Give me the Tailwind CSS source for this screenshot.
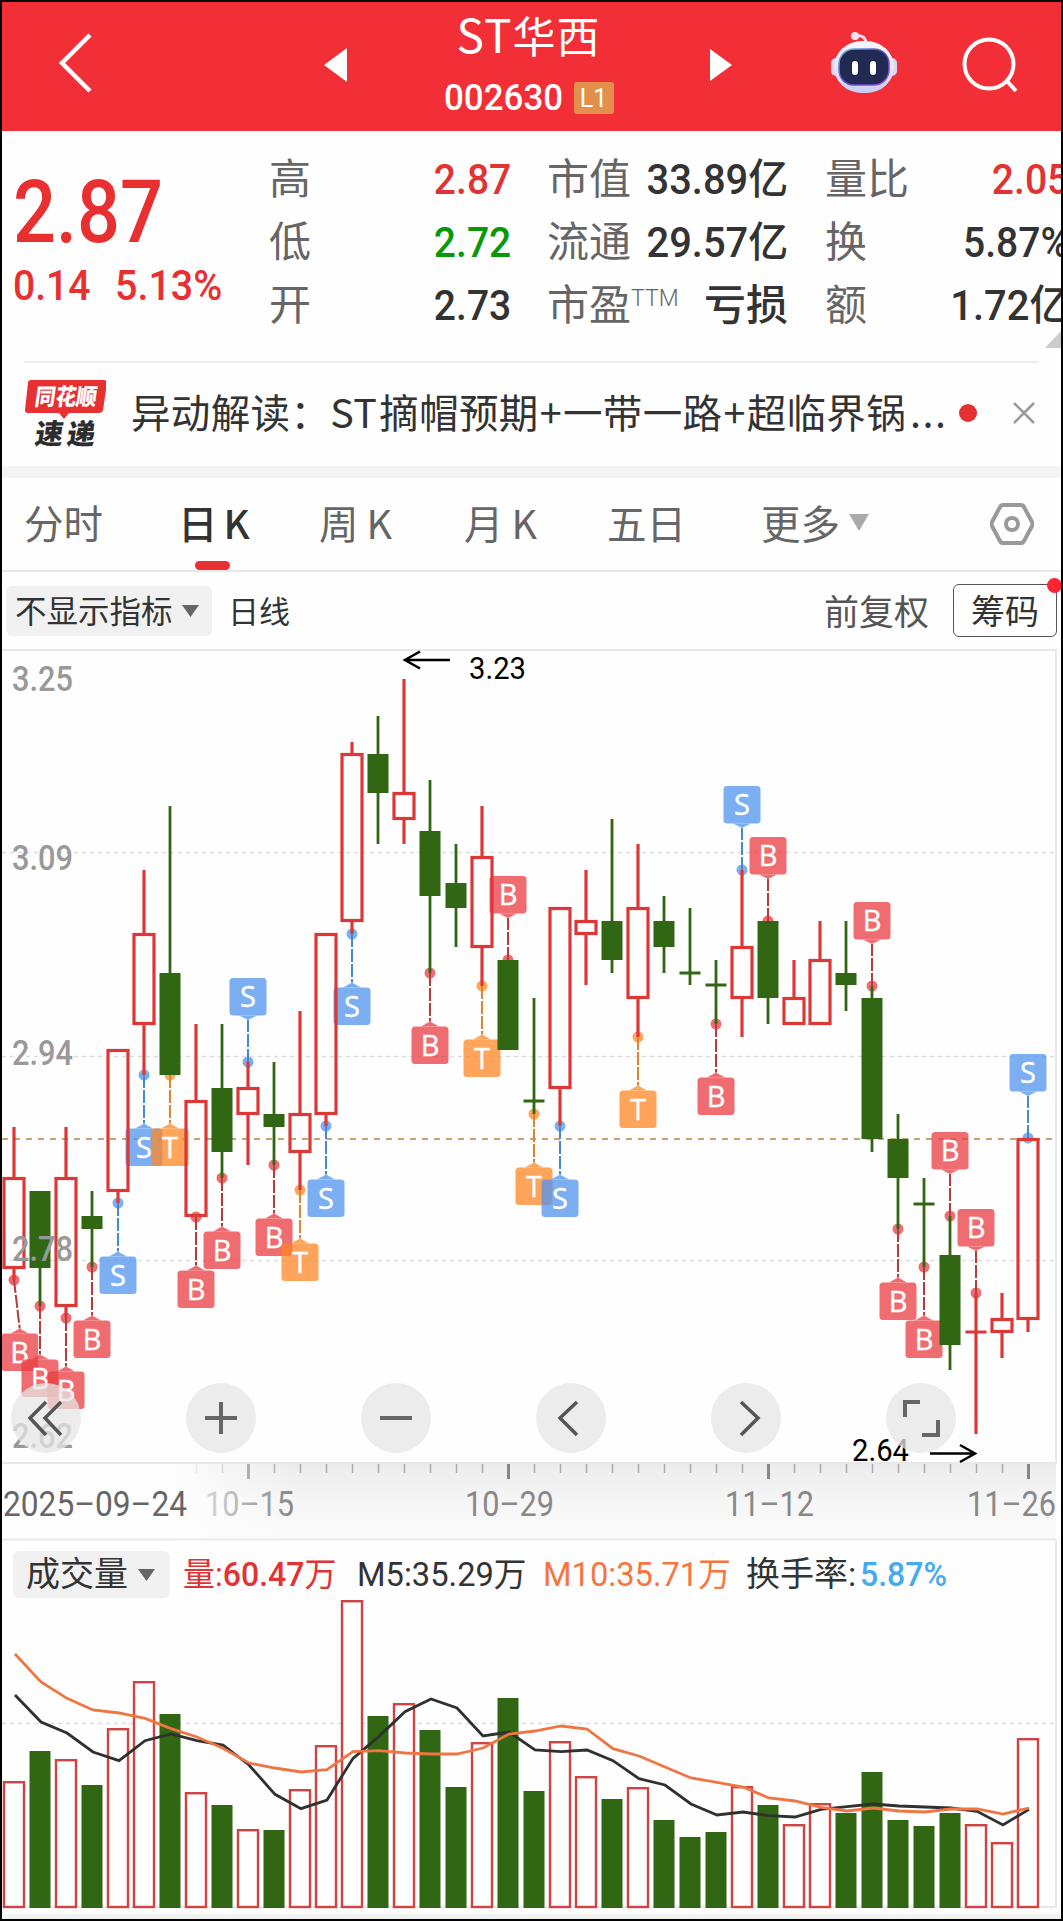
<!DOCTYPE html>
<html lang="zh-CN">
<head>
  <meta charset="UTF-8" />
  <meta name="viewport" content="width=device-width, initial-scale=1.0" />
  <title>ST华西 002630</title>
  <script src="https://cdn.jsdelivr.net/npm/@tailwindcss/browser@4"></script>
</head>
<body class="bg-black">
  <div class="w-[1063px] h-[1921px] border-2 border-black bg-[#fefefe] overflow-hidden flex flex-col font-['Roboto','Noto_Sans_CJK_SC',sans-serif] text-[#333] whitespace-nowrap">

    <!-- Header -->
    <header class="h-[129px] shrink-0 bg-[#f22f37] text-white flex items-center">
      <svg class="ml-[56px] -mt-2 w-[36px] h-[62px]" viewBox="0 0 36 62" fill="none" stroke="white" stroke-width="4.500"><path d="M32 3 4 31l28 28" /></svg>
      <svg class="ml-[230px] -mt-1 w-[23px] h-[34px]" viewBox="0 0 23 34" fill="white"><path d="M23 0v34L0 17z" /></svg>
      <div class="w-[363px] h-full flex flex-col items-center">
        <h1 class="text-[43px] tracking-[1px] leading-[62px] h-[66px] font-['Noto_Sans_CJK_SC',sans-serif]"><span class="text-[46px]">ST</span>华西</h1>
        <div class="flex items-center gap-[11px] h-[60px]">
          <span class="text-[36px] leading-none font-medium w-[119px]"><span class="inline-block origin-left scale-x-[.97]">002630</span></span>
          <span class="w-[40px] h-[32px] rounded-[3px] bg-[#e2904c] text-[25px] leading-[33px] text-center">L1</span>
        </div>
      </div>
      <svg class="-mt-1 w-[22px] h-[34px]" viewBox="0 0 22 34" fill="white"><path d="M0 1v32l22-16z" /></svg>
      <!-- Robot assistant -->
      <svg class="ml-[98px] -mt-2 w-[68px] h-[64px]" viewBox="0 0 68 64">
        <defs>
          <linearGradient id="head" x1="0" y1="0" x2="0" y2="1"><stop offset="0" stop-color="#fbf7ff" /><stop offset=".65" stop-color="#e4dffa" /><stop offset="1" stop-color="#c5cdf6" /></linearGradient>
          <linearGradient id="rim" x1="0" y1="0" x2="1" y2="1"><stop offset="0" stop-color="#6ec9dd" /><stop offset=".5" stop-color="#5a48c8" /><stop offset="1" stop-color="#8b55e8" /></linearGradient>
        </defs>
        <path d="M26 5c7-1 10 2 10 8" fill="none" stroke="#f3dcec" stroke-width="3" />
        <circle cx="25" cy="5" r="4" fill="#f6e3ee" />
        <rect x="1" y="27" width="12" height="18" rx="5" fill="#d9d5f5" />
        <rect x="55" y="27" width="12" height="18" rx="5" fill="#d9d5f5" />
        <rect x="4" y="10" width="60" height="52" rx="28" fill="url(#head)" />
        <rect x="9" y="18" width="50" height="36" rx="15" fill="#202a52" stroke="url(#rim)" stroke-width="1.500" />
        <rect x="22" y="30" width="6" height="14" rx="3" fill="white" />
        <rect x="40" y="30" width="6" height="14" rx="3" fill="white" />
      </svg>
      <svg class="ml-[63px] -mt-1 w-[58px] h-[58px]" viewBox="0 0 58 58" fill="none" stroke="white" stroke-width="4"><circle cx="28" cy="28" r="24.500" /><path d="m45 44 10 11" /></svg>
    </header>

    <!-- Quote -->
    <section class="h-[230px] shrink-0 flex relative">
      <div class="w-[267px] shrink-0 pl-[11px] pt-[33px] text-[#e93030]">
        <div class="text-[87px] leading-[96px] font-medium origin-left scale-x-[.87]">2.87</div>
        <div class="flex gap-[27px] text-[42px] leading-[52px]">
          <span class="w-[75px] inline-block origin-left scale-x-[.93] font-medium">0.14</span>
          <span class="inline-block origin-left scale-x-[.94] font-medium">5.13%</span>
        </div>
      </div>
      <div class="w-[242px] shrink-0 pt-[17px] text-[42px] leading-[63px]">
        <div class="flex justify-between"><span class="text-[#666]">高</span><span class="text-[#e13333] font-medium origin-right scale-x-[.93]">2.87</span></div>
        <div class="flex justify-between"><span class="text-[#666]">低</span><span class="text-[#089808] font-medium origin-right scale-x-[.93]">2.72</span></div>
        <div class="flex justify-between"><span class="text-[#666]">开</span><span class="font-medium origin-right scale-x-[.93]">2.73</span></div>
      </div>
      <div class="w-[241px] shrink-0 ml-[36px] pt-[17px] text-[42px] leading-[63px]">
        <div class="flex justify-between"><span class="text-[#666]">市值</span><span class="font-medium origin-right scale-x-[.95]">33.89亿</span></div>
        <div class="flex justify-between"><span class="text-[#666]">流通</span><span class="font-medium origin-right scale-x-[.95]">29.57亿</span></div>
        <div class="flex justify-between"><span class="text-[#666] flex">市盈<span class="text-[23px] leading-[50px] font-light">TTM</span></span><span class="font-medium">亏损</span></div>
      </div>
      <div class="w-[244px] shrink-0 ml-[37px] pt-[17px] text-[42px] leading-[63px]">
        <div class="flex justify-between"><span class="text-[#666]">量比</span><span class="text-[#e13333] font-medium origin-right scale-x-[.93]">2.05</span></div>
        <div class="flex justify-between"><span class="text-[#666]">换</span><span class="font-medium origin-right scale-x-[.93]">5.87%</span></div>
        <div class="flex justify-between"><span class="text-[#666]">额</span><span class="font-medium origin-right scale-x-[.95]">1.72亿</span></div>
      </div>
      <svg class="absolute left-[1043px] top-[200px] w-[16px] h-[17px]" viewBox="0 0 16 17" fill="#ccc"><path d="M16 0v17H0z" /></svg>
    </section>

    <!-- News -->
    <section class="h-[105px] shrink-0 mx-[22px] border-t-2 border-[#eee] flex items-center">
      <svg class="w-[82px] h-[80px]" viewBox="0 0 82 80">
        <path d="M7 5h73q3 0 3 3l-4 27q-1 3-4 3H45l-5 6-5-6H4q-3 0-3-3L4 8q0-3 3-3z" fill="#e63031" />
        <g font-family="Noto Sans CJK SC, sans-serif" font-weight="900">
          <text transform="translate(10 30) skewX(-8)" font-size="23" textLength="62" lengthAdjust="spacingAndGlyphs" fill="white">同花顺</text>
          <text transform="translate(10 69) skewX(-8)" font-size="28" textLength="60" fill="#2d2d2d">速递</text>
        </g>
      </svg>
      <div class="ml-[25px] w-[820px] -mt-[7px] text-[39.5px] tracking-[.35px] leading-[60px] font-['Noto_Sans_CJK_SC',sans-serif]">异动解读：ST<span class="ml-[2px]">摘帽预期</span><span class="mx-[1px]">+</span>一带一路<span class="mx-[1px]">+</span>超临界锅<span class="ml-1 tracking-[1.500px]">...</span></div>
      <div class="w-[18px] h-[18px] shrink-0 rounded-full bg-[#e63031] ml-[8px] -mt-1"></div>
      <svg class="ml-[35px] -mt-1 w-[24px] h-[24px] shrink-0" viewBox="0 0 24 24" fill="none" stroke="#999" stroke-width="2.500"><path d="m2 2 20 20M22 2 2 22" /></svg>
    </section>
    <div class="h-[12px] shrink-0 bg-[#f4f4f4]"></div>

    <!-- Period tabs -->
    <nav class="h-[94px] shrink-0 border-b-2 border-[#e8e8e8] flex items-center text-[39.5px] font-['Noto_Sans_CJK_SC',sans-serif] text-[#666]">
      <span class="ml-[22px] w-[154px] -mt-1">分时</span>
      <span class="w-[141px] h-full relative flex items-center pb-1 text-[#333] font-medium">日<span class="ml-1.5">K</span><span class="absolute left-[17px] bottom-0 w-[35px] h-[9px] rounded-full bg-[#e63031]"></span></span>
      <span class="w-[145px] flex -mt-1">周<span class="ml-2">K</span></span>
      <span class="w-[143px] flex -mt-1">月<span class="ml-2">K</span></span>
      <span class="w-[154px] -mt-1">五日</span>
      <span class="w-[229px] flex items-center gap-[9px] -mt-1">更多<svg class="w-[20px] h-[17px]" viewBox="0 0 20 17" fill="#aaa"><path d="M0 0h20L10 17z" /></svg></span>
      <svg class="w-[44px] h-[44px]" viewBox="0 0 44 44" fill="none" stroke="#999" stroke-width="4"><path d="M13 3h18q2 0 3 2l8 15q1 2 0 4l-8 15q-1 2-3 2H13q-2 0-3-2L2 24q-1-2 0-4l8-15q1-2 3-2z" /><circle cx="22" cy="22" r="6" /></svg>
    </nav>

    <!-- Indicator bar -->
    <div class="h-[77px] shrink-0 flex items-center font-['Noto_Sans_CJK_SC',sans-serif]">
      <div class="ml-[4px] w-[206px] h-[50px] rounded-md bg-[#f1f1f1] flex items-center pl-[9px] gap-[9px] text-[31.5px]"><span class="-mt-[2px]">不显示指标</span><svg class="w-[17px] h-[12px]" viewBox="0 0 17 12" fill="#666"><path d="M0 0h17L8.500 12z" /></svg></div>
      <span class="ml-[16px] text-[31px]">日线</span>
      <span class="ml-auto text-[35px] text-[#555]">前复权</span>
      <div class="relative ml-[24px] mr-[4px] w-[104px] h-[53px] rounded-[6px] border border-[#555] text-[34px] leading-[50px] text-center">筹码<span class="absolute -right-[6px] -top-[7px] w-[15px] h-[15px] rounded-full bg-[#ff2434]"></span></div>
    </div>

    <!-- Candles -->
    <section class="h-[892px] shrink-0 relative">
      <svg id="kline" class="block w-[1059px] h-[892px]" viewBox="2 649 1059 892"></svg>
      <div class="absolute left-[9px] top-[734px] w-[945px] flex justify-between">
        <button class="w-[70px] h-[70px] rounded-full bg-[#e6e6e6]/75"><svg viewBox="0 0 70 70" fill="none" stroke="#555" stroke-width="3.500"><path d="M35 19 19 35l16 17M50 19 34 35l16 17" /></svg></button>
        <button class="w-[70px] h-[70px] rounded-full bg-[#e6e6e6]/75"><svg viewBox="0 0 70 70" fill="none" stroke="#666" stroke-width="4"><path d="M19 35h32M35 19v32" /></svg></button>
        <button class="w-[70px] h-[70px] rounded-full bg-[#e6e6e6]/75"><svg viewBox="0 0 70 70" fill="none" stroke="#666" stroke-width="4"><path d="M19 35h32" /></svg></button>
        <button class="w-[70px] h-[70px] rounded-full bg-[#e6e6e6]/75"><svg viewBox="0 0 70 70" fill="none" stroke="#555" stroke-width="3.500"><path d="M41 19 24 35l17 17" /></svg></button>
        <button class="w-[70px] h-[70px] rounded-full bg-[#e6e6e6]/75"><svg viewBox="0 0 70 70" fill="none" stroke="#555" stroke-width="3.500"><path d="M30 19l17 16-17 17" /></svg></button>
        <button class="w-[70px] h-[70px] rounded-full bg-[#e6e6e6]/75"><svg viewBox="0 0 70 70" fill="none" stroke="#666" stroke-width="4"><path d="M19 34V19h15M36 52h16V37" /></svg></button>
      </div>
    </section>

    <!-- Volume -->
    <div class="h-[63px] shrink-0 flex items-center pl-[11px] pt-[4px] text-[33px]">
      <div class="w-[157px] h-[47px] rounded-md bg-[#f1f1f1] flex items-center pl-[13px] gap-[10px] text-[34px]">成交量<svg class="w-[17px] h-[12px]" viewBox="0 0 17 12" fill="#666"><path d="M0 0h17L8.500 12z" /></svg></div>
      <span class="ml-[13px] w-[174px] text-[#e13333]"><span class="inline-block origin-left scale-x-[.97]">量:<span class="font-medium">60.47</span>万</span></span>
      <span class="w-[186px]"><span class="inline-block origin-left scale-x-[.99]">M5:35.29万</span></span>
      <span class="w-[203px] text-[#f5763f]"><span class="inline-block origin-left scale-x-[.99]">M10:35.71万</span></span>
      <span class="w-[114px] text-[34px]">换手率:</span>
      <span class="text-[#45aaee] font-medium"><span class="inline-block origin-left scale-x-[.97]">5.87%</span></span>
    </div>
    <svg id="volume" class="block shrink-0 w-[1059px] h-[316px] overflow-visible" viewBox="2 1604 1059 316"></svg>
  </div>

  <script>
    const RED = '#dc3836', GREEN = '#316613';
    const X = i => 14 + 26 * i;

    // [kind, high, bodyTop, bodyBottom, low, marker, marker side]; equal body values draw a cross
    const candles = [
      ['r',1127,1177,1269,1280,'B',1], ['g',1191,1191,1268,1306,'B',1], ['r',1127,1177,1307,1318,'B',1],
      ['g',1191,1216,1229,1267,'B',1], ['r',1049,1049,1192,1203,'S',1], ['r',870,933,1025,1075,'S',1],
      ['g',806,973,1075,1075,'T',1], ['r',1024,1100,1217,1217,'B',1], ['g',1024,1088,1152,1178,'B',1],
      ['r',1062,1087,1115,1165,'S',-1], ['g',1062,1114,1127,1165,'B',1], ['r',1011,1113,1153,1190,'T',1],
      ['r',933,933,1115,1126,'S',1], ['r',742,753,922,934,'S',1], ['g',716,754,793,844],
      ['r',679,792,820,844], ['g',780,831,896,973,'B',1], ['g',844,883,908,947],
      ['r',806,856,948,986,'T',1], ['g',960,960,1050,1050,'B',-1], ['g',998,1101,1101,1114,'T',1],
      ['r',907,907,1089,1126,'S',1], ['r',870,920,935,985], ['g',819,921,960,973],
      ['r',844,907,999,1037,'T',1], ['g',896,921,947,973], ['g',908,973,973,985],
      ['g',960,985,985,1024,'B',1], ['r',870,946,999,1037,'S',-1], ['g',921,921,998,1024,'B',-1],
      ['r',960,997,1025,1025], ['r',921,959,1025,1025], ['g',921,973,985,1011],
      ['g',986,998,1139,1152,'B',-1], ['g',1114,1139,1178,1229,'B',1], ['g',1178,1204,1204,1267,'B',1],
      ['g',1216,1255,1345,1370,'B',-1], ['r',1293,1332,1332,1434,'B',-1], ['r',1293,1318,1333,1358],
      ['r',1138,1138,1320,1332,'S',-1]
    ];
    const fills = { B: '#ea3d41', S: '#5195ef', T: '#ff8725' };
    const stems = { B: '#b83b3b', S: '#4a88cc', T: '#dd8430' };

    function label(x, y, w, size, text, extra) {
      return `<text x="${x}" y="${y}" font-size="${size}" textLength="${w}" lengthAdjust="spacingAndGlyphs" ${extra}>${text}</text>`;
    }

    let k = `<defs>
      <linearGradient id="axis" x1="0" y1="0" x2="0" y2="1"><stop offset="0" stop-color="#ececec"/><stop offset=".5" stop-color="#f6f6f6"/><stop offset="1" stop-color="#fbfbfb"/></linearGradient>
      <linearGradient id="fade"><stop offset="0" stop-color="#fefefe"/><stop offset=".55" stop-color="#fefefe"/><stop offset="1" stop-color="#fefefe" stop-opacity="0"/></linearGradient>
      </defs>`;
    for (const y of [852.5, 1056.5, 1260.5]) k += `<path d="M2 ${y}H1054" stroke="#ddd" stroke-width="1.500" stroke-dasharray="4 4"/>`;
    k += `<path d="M2 1139H1054" stroke="#c9a56d" stroke-width="2" stroke-dasharray="6 6"/>`;
    k += `<path d="M2 650H1056V1463H2" fill="none" stroke="#e9e9e9" stroke-width="2"/>`;

    // trade markers sit beneath the candles
    candles.forEach(([, high, , , low, m, side], i) => {
      if (!m) return;
      const x = X(i), y = side > 0 ? low : high, lx = Math.max(x, 19.7);
      const tip = side > 0 ? y + 48.5 : y - 42;
      const top = side > 0 ? y + 53.5 : y - 84;
      const base = side > 0 ? top : top + 37.5;
      k += `<g opacity=".75" fill="${fills[m]}"><circle cx="${x}" cy="${y}" r="5.500"/><path d="M${lx - 9} ${base}L${lx} ${tip}L${lx + 9} ${base}z"/><rect x="${lx - 18.5}" y="${top}" width="37" height="37.500" rx="3.500"/></g>`;
      k += `<path d="M${x} ${y}L${lx} ${tip}" stroke="${stems[m]}" stroke-width="2" stroke-dasharray="13 2"/>`;
      k += `<text x="${lx}" y="${top + 29}" font-family="Open Sans, sans-serif" font-size="29" text-anchor="middle" fill="white" stroke="white" stroke-width=".4">${m}</text>`;
    });

    candles.forEach(([kind, high, top, bottom, low], i) => {
      const x = X(i), c = kind === 'r' ? RED : GREEN;
      k += `<path d="M${x} ${high}V${top}M${x} ${bottom}V${low}" stroke="${c}" stroke-width="${kind === 'r' ? 3.2 : 2.8}"/>`;
      if (top === bottom) k += `<path d="M${x - 10.5} ${top}h21" stroke="${c}" stroke-width="3"/>`;
      else if (kind === 'r') k += `<rect x="${x - 10}" y="${top + 1.5}" width="20" height="${bottom - top - 3}" fill="none" stroke="${c}" stroke-width="3.200"/>`;
      else k += `<rect x="${x - 10.5}" y="${top}" width="21" height="${bottom - top}" fill="${c}"/>`;
    });

    [['3.25', 691], ['3.09', 870], ['2.94', 1065], ['2.78', 1261], ['2.62', 1448]].forEach(([t, y]) => {
      k += label(12, y, 61, 35, t, 'fill="#999" font-weight="500"');
    });
    k += label(469, 679, 57, 30.5, '3.23', 'fill="black"') + label(852, 1461, 57, 30.5, '2.64', 'fill="black"');
    k += `<path d="M450 660H405M420 651.500L405 660L420 668.500M930 1453.500H975M960 1445L975 1453.500L960 1462" fill="none" stroke="black" stroke-width="2.500"/>`;

    // date axis
    k += `<rect x="2" y="1464" width="1054" height="76" fill="url(#axis)"/>`;
    for (let i = 7; i < 40; i++) {
      const major = i % 10 === 9;
      k += `<path d="M${X(i) + .5} 1464v${major ? 15 : 9}" stroke="${major ? '#888' : '#aaa'}" stroke-width="${major ? 3 : 1.5}"/>`;
    }
    [['10–15', 205], ['10–29', 465], ['11–12', 725], ['11–26', 967]].forEach(([t, x]) => {
      k += label(x, 1516, 89, 35, t, 'fill="#888"');
    });
    k += `<rect x="2" y="1464" width="290" height="75" fill="url(#fade)"/>`;
    k += label(3, 1516, 184, 35, '2025–09–24', 'fill="#666"');
    k += `<path d="M2 1539.500H1056" stroke="#e9e9e9" stroke-width="2"/>`;
    document.getElementById('kline').innerHTML = k;

    // volume bars, top y of each
    const tops = [1781,1751,1759,1785,1728,1681,1714,1792,1805,1829,1830,1789,1745,1600,1716,1703,1730,1787,1742,1698,
      1791,1741,1776,1799,1787,1820,1837,1832,1786,1805,1824,1803,1813,1772,1820,1826,1813,1824,1842,1738];
    const ma5 = [495,576,609,666,692,632,612,632,645,705,793,836,810,685,619,545,507,534,618,606,
      660,665,660,692,746,765,822,855,846,857,861,838,830,822,828,831,834,844,885,838];
    const ma10 = [372,456,505,540,549,565,596,621,655,699,714,726,719,665,662,669,672,672,654,612,
      603,588,597,656,678,711,744,757,771,804,813,832,843,834,843,846,837,837,852,834];

    let v = `<path d="M2 1723.500H1054" stroke="#ddd" stroke-width="1.500" stroke-dasharray="4 4"/>
      <path d="M2 1907H1056" stroke="#e9e9e9" stroke-width="2"/><path d="M1056 1540V1908" stroke="#e9e9e9" stroke-width="2"/>
      <rect x="2" y="1914" width="1059" height="5" fill="#f3f3f3"/>`;
    tops.forEach((t, i) => {
      const x = X(i);
      if (candles[i][0] === 'r') v += `<rect x="${x - 10}" y="${t + 1.2}" width="20" height="${1907 - t - 1.2}" fill="#fefefe" stroke="#cf4342" stroke-width="2.400"/>`;
      else v += `<rect x="${x - 10.5}" y="${t}" width="21" height="${1908 - t}" fill="${GREEN}"/>`;
    });
    const line = (d, c) => `<polyline points="${d.map((y, i) => (X(i) + 1) + ',' + (1530 + y / 3)).join(' ')}" fill="none" stroke="${c}" stroke-width="2.800"/>`;
    v += line(ma5, '#303030') + line(ma10, '#ee7642');
    document.getElementById('volume').innerHTML = v;
  </script>
</body>
</html>
